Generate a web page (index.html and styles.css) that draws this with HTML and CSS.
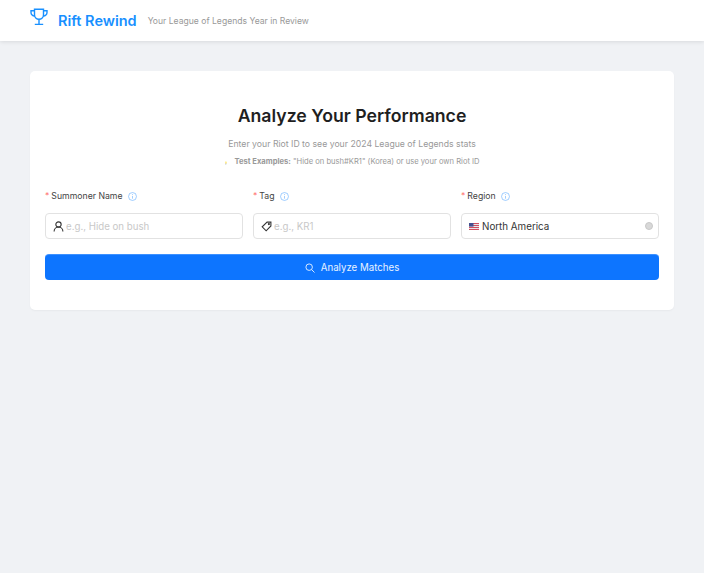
FILE: index.html
```html
<!DOCTYPE html>
<html lang="en">
<head>
    <meta charset="UTF-8">
    <meta name="viewport" content="width=device-width, initial-scale=1.0">
    <title>Rift Rewind</title>
    <link rel="stylesheet" href="styles.css">
</head>
<body>
    <header class="top-bar">
        <svg class="trophy" viewBox="0 0 18 18" fill="none" stroke="currentColor" stroke-width="1.4">
            <path d="M4.5 1.2h9v5.6a4.5 4.5 0 0 1-9 0z"/>
            <path d="M4.5 2.8H1v1.7a3.6 3.6 0 0 0 3.7 3.6M13.5 2.8H17v1.7a3.6 3.6 0 0 1-3.7 3.6"/>
            <path d="M9 11.3v4.9M4.8 16.4h8.4"/>
        </svg>
        <span class="brand">Rift Rewind</span>
        <span class="tagline">Your League of Legends Year in Review</span>
    </header>

    <main class="content">
        <section class="card">
            <h1>Analyze Your Performance</h1>
            <p class="intro">Enter your Riot ID to see your 2024 League of Legends stats</p>
            <p class="examples"><span class="bulb">💡</span> <strong>Test Examples:</strong> "Hide on bush#KR1" (Korea) or use your own Riot ID</p>

            <form class="fields">
                <div class="field">
                    <div class="field-label">
                        <span class="required">*</span> Summoner Name
                        <svg class="info" viewBox="0 0 10 10" fill="none" stroke="currentColor" stroke-width="0.7">
                            <circle cx="5" cy="5" r="4.4"/>
                            <path d="M5 4.4v3M5 2.4v1"/>
                        </svg>
                    </div>
                    <div class="input-box">
                        <svg class="input-icon" viewBox="0 0 12 12" fill="none" stroke="currentColor" stroke-width="1.2">
                            <circle cx="6" cy="3.8" r="2.9"/>
                            <path d="M1.2 11.4a4.8 4.8 0 0 1 9.6 0"/>
                        </svg>
                        <span class="placeholder">e.g., Hide on bush</span>
                    </div>
                </div>
                <div class="field">
                    <div class="field-label">
                        <span class="required">*</span> Tag
                        <svg class="info" viewBox="0 0 10 10" fill="none" stroke="currentColor" stroke-width="0.7">
                            <circle cx="5" cy="5" r="4.4"/>
                            <path d="M5 4.4v3M5 2.4v1"/>
                        </svg>
                    </div>
                    <div class="input-box">
                        <svg class="input-icon" viewBox="0 0 12 12" fill="none" stroke="currentColor" stroke-width="1.2">
                            <path d="M6.6 1.2h4.2v4.2l-5.2 5.3-4.3-4.3z"/>
                            <circle cx="8.6" cy="3.4" r="0.6"/>
                        </svg>
                        <span class="placeholder">e.g., KR1</span>
                    </div>
                </div>
                <div class="field">
                    <div class="field-label">
                        <span class="required">*</span> Region
                        <svg class="info" viewBox="0 0 10 10" fill="none" stroke="currentColor" stroke-width="0.7">
                            <circle cx="5" cy="5" r="4.4"/>
                            <path d="M5 4.4v3M5 2.4v1"/>
                        </svg>
                    </div>
                    <div class="input-box">
                        <svg class="flag" viewBox="0 0 10 7">
                            <rect width="10" height="7" fill="#e8e4ea"/>
                            <path d="M0 .5h10M0 2.5h10M0 4.5h10M0 6.5h10" stroke="#d0505f" stroke-width="1"/>
                            <rect width="4.5" height="3.6" fill="#44508f"/>
                        </svg>
                        <span class="value">North America</span>
                        <span class="clear"></span>
                    </div>
                </div>
            </form>

            <button class="submit" type="button">
                <svg class="search" viewBox="0 0 12 12" fill="none" stroke="currentColor" stroke-width="1.1">
                    <circle cx="5" cy="5" r="3.9"/>
                    <path d="M8 8l3.4 3.4"/>
                </svg>
                Analyze Matches
            </button>
        </section>
    </main>
</body>
</html>
```

FILE: styles.css
```css
* {
    box-sizing: border-box;
}
body {
    font-family: Inter, 'Liberation Sans', sans-serif;
    margin: 0;
    min-height: 573px;
    background-color: #f0f2f5;
    color: #333;
}
.top-bar {
    height: 41px;
    background-color: white;
    padding: 0 30px;
    display: flex;
    align-items: center;
    box-shadow: 0 1px 4px rgba(0,0,0,0.1);
}
.trophy {
    width: 18px;
    height: 18px;
    margin-top: -8px;
    color: #1890ff;
    flex: none;
}
.brand {
    font-size: 14.5px;
    font-weight: 600;
    color: #1890ff;
    margin-left: 10px;
}
.tagline {
    font-size: 8.6px;
    color: #999;
    margin-left: 11px;
}
.content {
    padding: 30px;
}
.card {
    background-color: white;
    border-radius: 5px;
    padding: 33px 15px 30px;
    height: 239px;
    box-shadow: 0 1px 2px rgba(0,0,0,0.04);
}
h1 {
    margin: 0;
    font-size: 17.7px;
    line-height: 24px;
    font-weight: 600;
    text-align: center;
    color: #1f1f1f;
}
.intro {
    margin: 10px 0 0;
    font-size: 8.7px;
    line-height: 12px;
    text-align: center;
    color: #999;
}
.examples {
    margin: 6px 0 0;
    font-size: 7.6px;
    line-height: 11px;
    text-align: center;
    color: #999;
}
.bulb {
    font-size: 3px;
    margin-right: 4px;
    opacity: 0.5;
}
.fields {
    display: grid;
    grid-template-columns: repeat(3, 1fr);
    gap: 10px;
    margin-top: 21px;
}
.field-label {
    display: flex;
    align-items: center;
    gap: 2px;
    height: 12px;
    font-size: 8.7px;
    color: #444;
}
.required {
    color: #ff7875;
}
.info {
    width: 9px;
    height: 9px;
    margin-left: 3px;
    color: #69b1ff;
}
.input-box {
    display: flex;
    align-items: center;
    height: 26px;
    margin-top: 11px;
    padding: 0 7px;
    background-color: white;
    border: 1px solid #e2e2e2;
    border-radius: 4px;
}
.input-icon {
    width: 11px;
    height: 11px;
    color: #333;
    flex: none;
}
.placeholder {
    font-size: 9.7px;
    color: #c8c8c8;
    margin-left: 2px;
}
.flag {
    width: 10px;
    height: 7px;
    flex: none;
}
.value {
    font-size: 9.8px;
    color: #333;
    margin-left: 3px;
}
.clear {
    width: 8px;
    height: 8px;
    margin-left: auto;
    margin-right: -2px;
    border-radius: 50%;
    background-color: #d8d8d8;
    border: 1px solid #c8c8c8;
}
.submit {
    display: flex;
    align-items: center;
    justify-content: center;
    gap: 6px;
    width: 100%;
    height: 26px;
    margin-top: 15px;
    border: none;
    border-top: 1px solid #3d91ff;
    border-radius: 4px;
    background-color: #0d75ff;
    color: #e8f2ff;
    font-family: inherit;
    font-size: 9.7px;
    cursor: pointer;
}
.search {
    width: 10px;
    height: 10px;
}
```
